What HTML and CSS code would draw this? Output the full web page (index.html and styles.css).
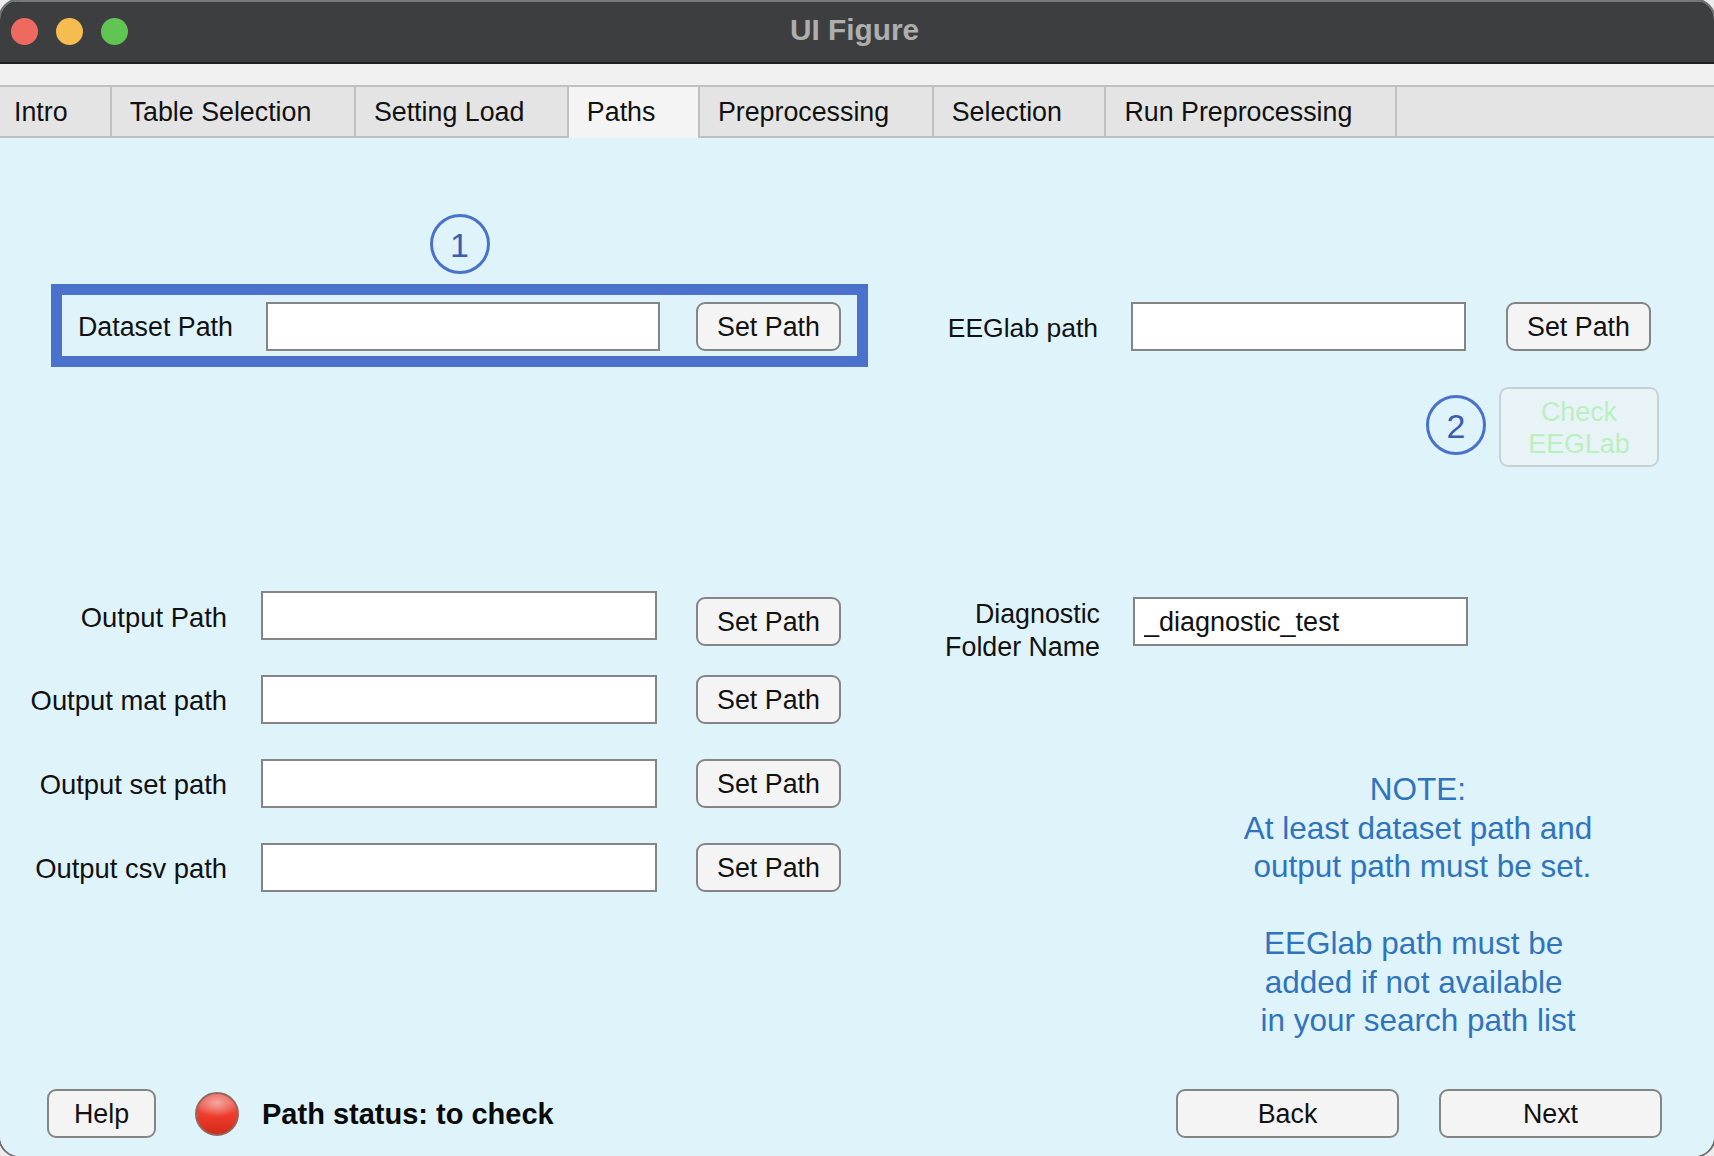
FILE: index.html
```html
<!DOCTYPE html>
<html>
<head>
    <meta charset="UTF-8">
    <title>UI Figure</title>
    <link rel="stylesheet" href="styles.css">
</head>
<body>
    <div class="window">
        <!-- title bar -->
        <div class="titlebar">
            <div class="lights">
                <span class="light red"></span>
                <span class="light yellow"></span>
                <span class="light green"></span>
            </div>
            <div class="title">UI Figure</div>
        </div>
        <div class="strip"></div>

        <div class="tabs">
            <a class="tab" href="#intro">Intro</a>
            <a class="tab" href="#table">Table Selection</a>
            <a class="tab" href="#setting">Setting Load</a>
            <a class="tab active" href="#paths">Paths</a>
            <a class="tab" href="#preprocessing">Preprocessing</a>
            <a class="tab" href="#selection">Selection</a>
            <a class="tab" href="#run">Run Preprocessing</a>
        </div>

        <div class="panel">
            <div class="columns">
                <div class="left">
                    <div class="marker-row">
                        <span class="marker">1</span>
                    </div>
                    <div class="highlight">
                        <label class="dataset-label">Dataset Path</label>
                        <input type="text" class="field dataset-field">
                        <button type="button" class="btn set-btn">Set Path</button>
                    </div>

                    <div class="outputs">
                        <div class="path-row first">
                            <label class="row-label">Output Path</label>
                            <input type="text" class="field">
                            <button type="button" class="btn set-btn">Set Path</button>
                        </div>
                        <div class="path-row second">
                            <label class="row-label">Output mat path</label>
                            <input type="text" class="field">
                            <button type="button" class="btn set-btn">Set Path</button>
                        </div>
                        <div class="path-row">
                            <label class="row-label">Output set path</label>
                            <input type="text" class="field">
                            <button type="button" class="btn set-btn">Set Path</button>
                        </div>
                        <div class="path-row">
                            <label class="row-label">Output csv path</label>
                            <input type="text" class="field">
                            <button type="button" class="btn set-btn">Set Path</button>
                        </div>
                    </div>
                </div>

                <div class="right">
                    <div class="eeg-row">
                        <label class="eeg-label">EEGlab path</label>
                        <input type="text" class="field eeg-field">
                        <button type="button" class="btn set-btn">Set Path</button>
                    </div>
                    <div class="check-row">
                        <span class="marker">2</span>
                        <button type="button" class="btn check-btn" disabled>Check<br>EEGLab</button>
                    </div>
                    <div class="diag-row">
                        <label class="diag-label">Diagnostic<br>Folder Name</label>
                        <input type="text" class="field eeg-field diag-field" value="_diagnostic_test">
                    </div>
                    <div class="note">NOTE:
At least dataset path and
 output path must be set.

EEGlab path must be 
added if not available 
in your search path list</div>
                </div>
            </div>

            <div class="footer">
                <button type="button" class="btn help-btn">Help</button>
                <span class="lamp"></span>
                <span class="status">Path status: to check</span>
                <button type="button" class="btn nav-btn back-btn">Back</button>
                <button type="button" class="btn nav-btn">Next</button>
            </div>
        </div>
    </div>
</body>
</html>
```

FILE: styles.css
```css
* {
  box-sizing: border-box;
}
html, body {
  margin: 0;
  height: 100%;
}
body {
  background-color: #ececec;
  font-family: "Liberation Sans", Arial, sans-serif;
  font-size: 26.8px;
  color: #111;
  overflow: hidden;
}
.window {
  height: 1156px;
  display: flex;
  flex-direction: column;
  border-radius: 20px;
  overflow: hidden;
  background-color: #dff3fb;
  box-shadow: 0 0 0 2px #6f6f6f;
}

/* Title bar */
.titlebar {
  height: 64px;
  flex: none;
  display: flex;
  align-items: center;
  position: relative;
  background-color: #3d3e40;
  border-top: 2px solid #77787a;
  border-bottom: 2px solid #1f1f20;
}
.lights {
  display: flex;
  gap: 18px;
  padding-left: 11px;
  margin-top: -2px;
}
.light {
  width: 27px;
  height: 27px;
  border-radius: 50%;
}
.red { background-color: #ee6a5f; }
.yellow { background-color: #f5bd4f; }
.green { background-color: #61c554; }
.title {
  position: absolute;
  left: 0;
  right: 5px;
  top: 11px;
  text-align: center;
  font-size: 29.8px;
  font-weight: bold;
  color: #adaeaf;
}
.strip {
  height: 21px;
  flex: none;
  background-color: #f0f0f0;
}

/* Tabs */
.tabs {
  height: 53px;
  flex: none;
  display: flex;
  background-color: #e4e4e4;
  border-top: 2px solid #c0c0c0;
  border-bottom: 2px solid #c0c0c0;
}
.tab {
  display: block;
  padding: 10px 42.5px 0 18px;
  color: #111;
  text-decoration: none;
  border-right: 2px solid #c0c0c0;
  white-space: nowrap;
}
.tab:first-child {
  padding-left: 14px;
  padding-right: 42px;
}
.tab.active {
  background-color: #f4f4f4;
  height: 51px;
  border-bottom: 0;
}

/* Main panel */
.panel {
  flex: 1;
  display: flex;
  flex-direction: column;
  justify-content: space-between;
  background-color: #dff3fb;
}
.columns {
  display: flex;
}
.left {
  width: 868px;
  flex: none;
}
.right {
  flex: 1;
}
.marker-row {
  margin: 76px 0 10px 51px;
  display: flex;
  justify-content: center;
}
.marker {
  width: 60px;
  height: 60px;
  flex: none;
  display: flex;
  align-items: center;
  justify-content: center;
  padding-top: 2px;
  border: 3px solid #4a71cb;
  border-radius: 50%;
  font-size: 34px;
  color: #3a5db0;
}

/* Common controls */
.field {
  width: 394px;
  height: 49px;
  flex: none;
  padding: 0 9px;
  border: 2px solid #858585;
  border-radius: 0;
  background-color: #fff;
  font-family: inherit;
  font-size: 27px;
  color: #111;
}
.btn {
  height: 49px;
  flex: none;
  padding: 2px 0 0;
  border: 2px solid #858585;
  border-radius: 9px;
  background-color: #f4f4f4;
  font-family: inherit;
  font-size: 26.8px;
  color: #111;
}
.set-btn {
  width: 145px;
}

/* Dataset path box */
.highlight {
  margin-left: 51px;
  height: 83px;
  display: flex;
  align-items: center;
  border: 11px solid #4a71cb;
  padding: 2px 0 0 16px;
}
.dataset-label {
  width: 188px;
  flex: none;
  padding-top: 2px;
}
.dataset-field {
  margin-right: 36px;
}

/* Output rows */
.outputs {
  margin-top: 224px;
}
.path-row {
  display: flex;
  margin-top: 35px;
}
.path-row.first {
  margin-top: 0;
}
.path-row.second {
  margin-top: 29px;
}
.path-row .field {
  width: 396px;
  margin-right: 39px;
}
.path-row.first .set-btn {
  margin-top: 6px;
}
.row-label {
  width: 227px;
  flex: none;
  margin-right: 34px;
  padding-top: 10px;
  font-size: 27.4px;
  text-align: right;
  white-space: nowrap;
}
.path-row.first .row-label {
  padding-top: 11px;
}

/* Right column */
.eeg-row {
  margin-top: 164px;
  display: flex;
  align-items: center;
}
.eeg-label {
  width: 230px;
  flex: none;
  margin-right: 33px;
  padding-top: 3px;
  font-size: 26.5px;
  text-align: right;
}
.eeg-field {
  width: 335px;
}
.eeg-row .eeg-field {
  margin-right: 40px;
}
.check-row {
  margin-top: 36px;
  display: flex;
  align-items: center;
  justify-content: flex-end;
  gap: 13px;
  padding-right: 55px;
}
.check-row .marker {
  margin-bottom: 4px;
}
.check-btn {
  width: 160px;
  height: 80px;
  line-height: 32px;
  border-color: #c8d2d6;
  background-color: #e8f3f7;
  color: #b8f0c0;
}
.diag-row {
  margin-top: 130px;
  display: flex;
  align-items: flex-start;
}
.diag-label {
  width: 232px;
  flex: none;
  margin-right: 33px;
  padding-top: 1px;
  text-align: right;
  line-height: 33px;
}
.diag-field {
  padding-top: 2px;
}
.note {
  margin: 106px 0 0 285px;
  width: 530px;
  text-align: center;
  white-space: pre;
  font-size: 31.5px;
  line-height: 38.5px;
  color: #2f74bd;
}

/* Footer */
.footer {
  display: flex;
  align-items: center;
  padding: 0 52px 18px 47px;
}
.help-btn {
  width: 109px;
}
.lamp {
  width: 44px;
  height: 44px;
  flex: none;
  margin-left: 39px;
  border-radius: 50%;
  background: radial-gradient(ellipse 60% 35% at 50% 22%, #f3a9a2 0%, rgba(240, 120, 108, 0) 100%), linear-gradient(#ee5a4c 0%, #ee3a2a 55%, #cf2c1c 100%);
  border: 2px solid #94685f;
}
.status {
  margin-left: 23px;
  padding-top: 2px;
  font-size: 29px;
  font-weight: bold;
  color: #0a0a0a;
}
.nav-btn {
  width: 223px;
}
.back-btn {
  margin-left: auto;
  margin-right: 40px;
}
```
